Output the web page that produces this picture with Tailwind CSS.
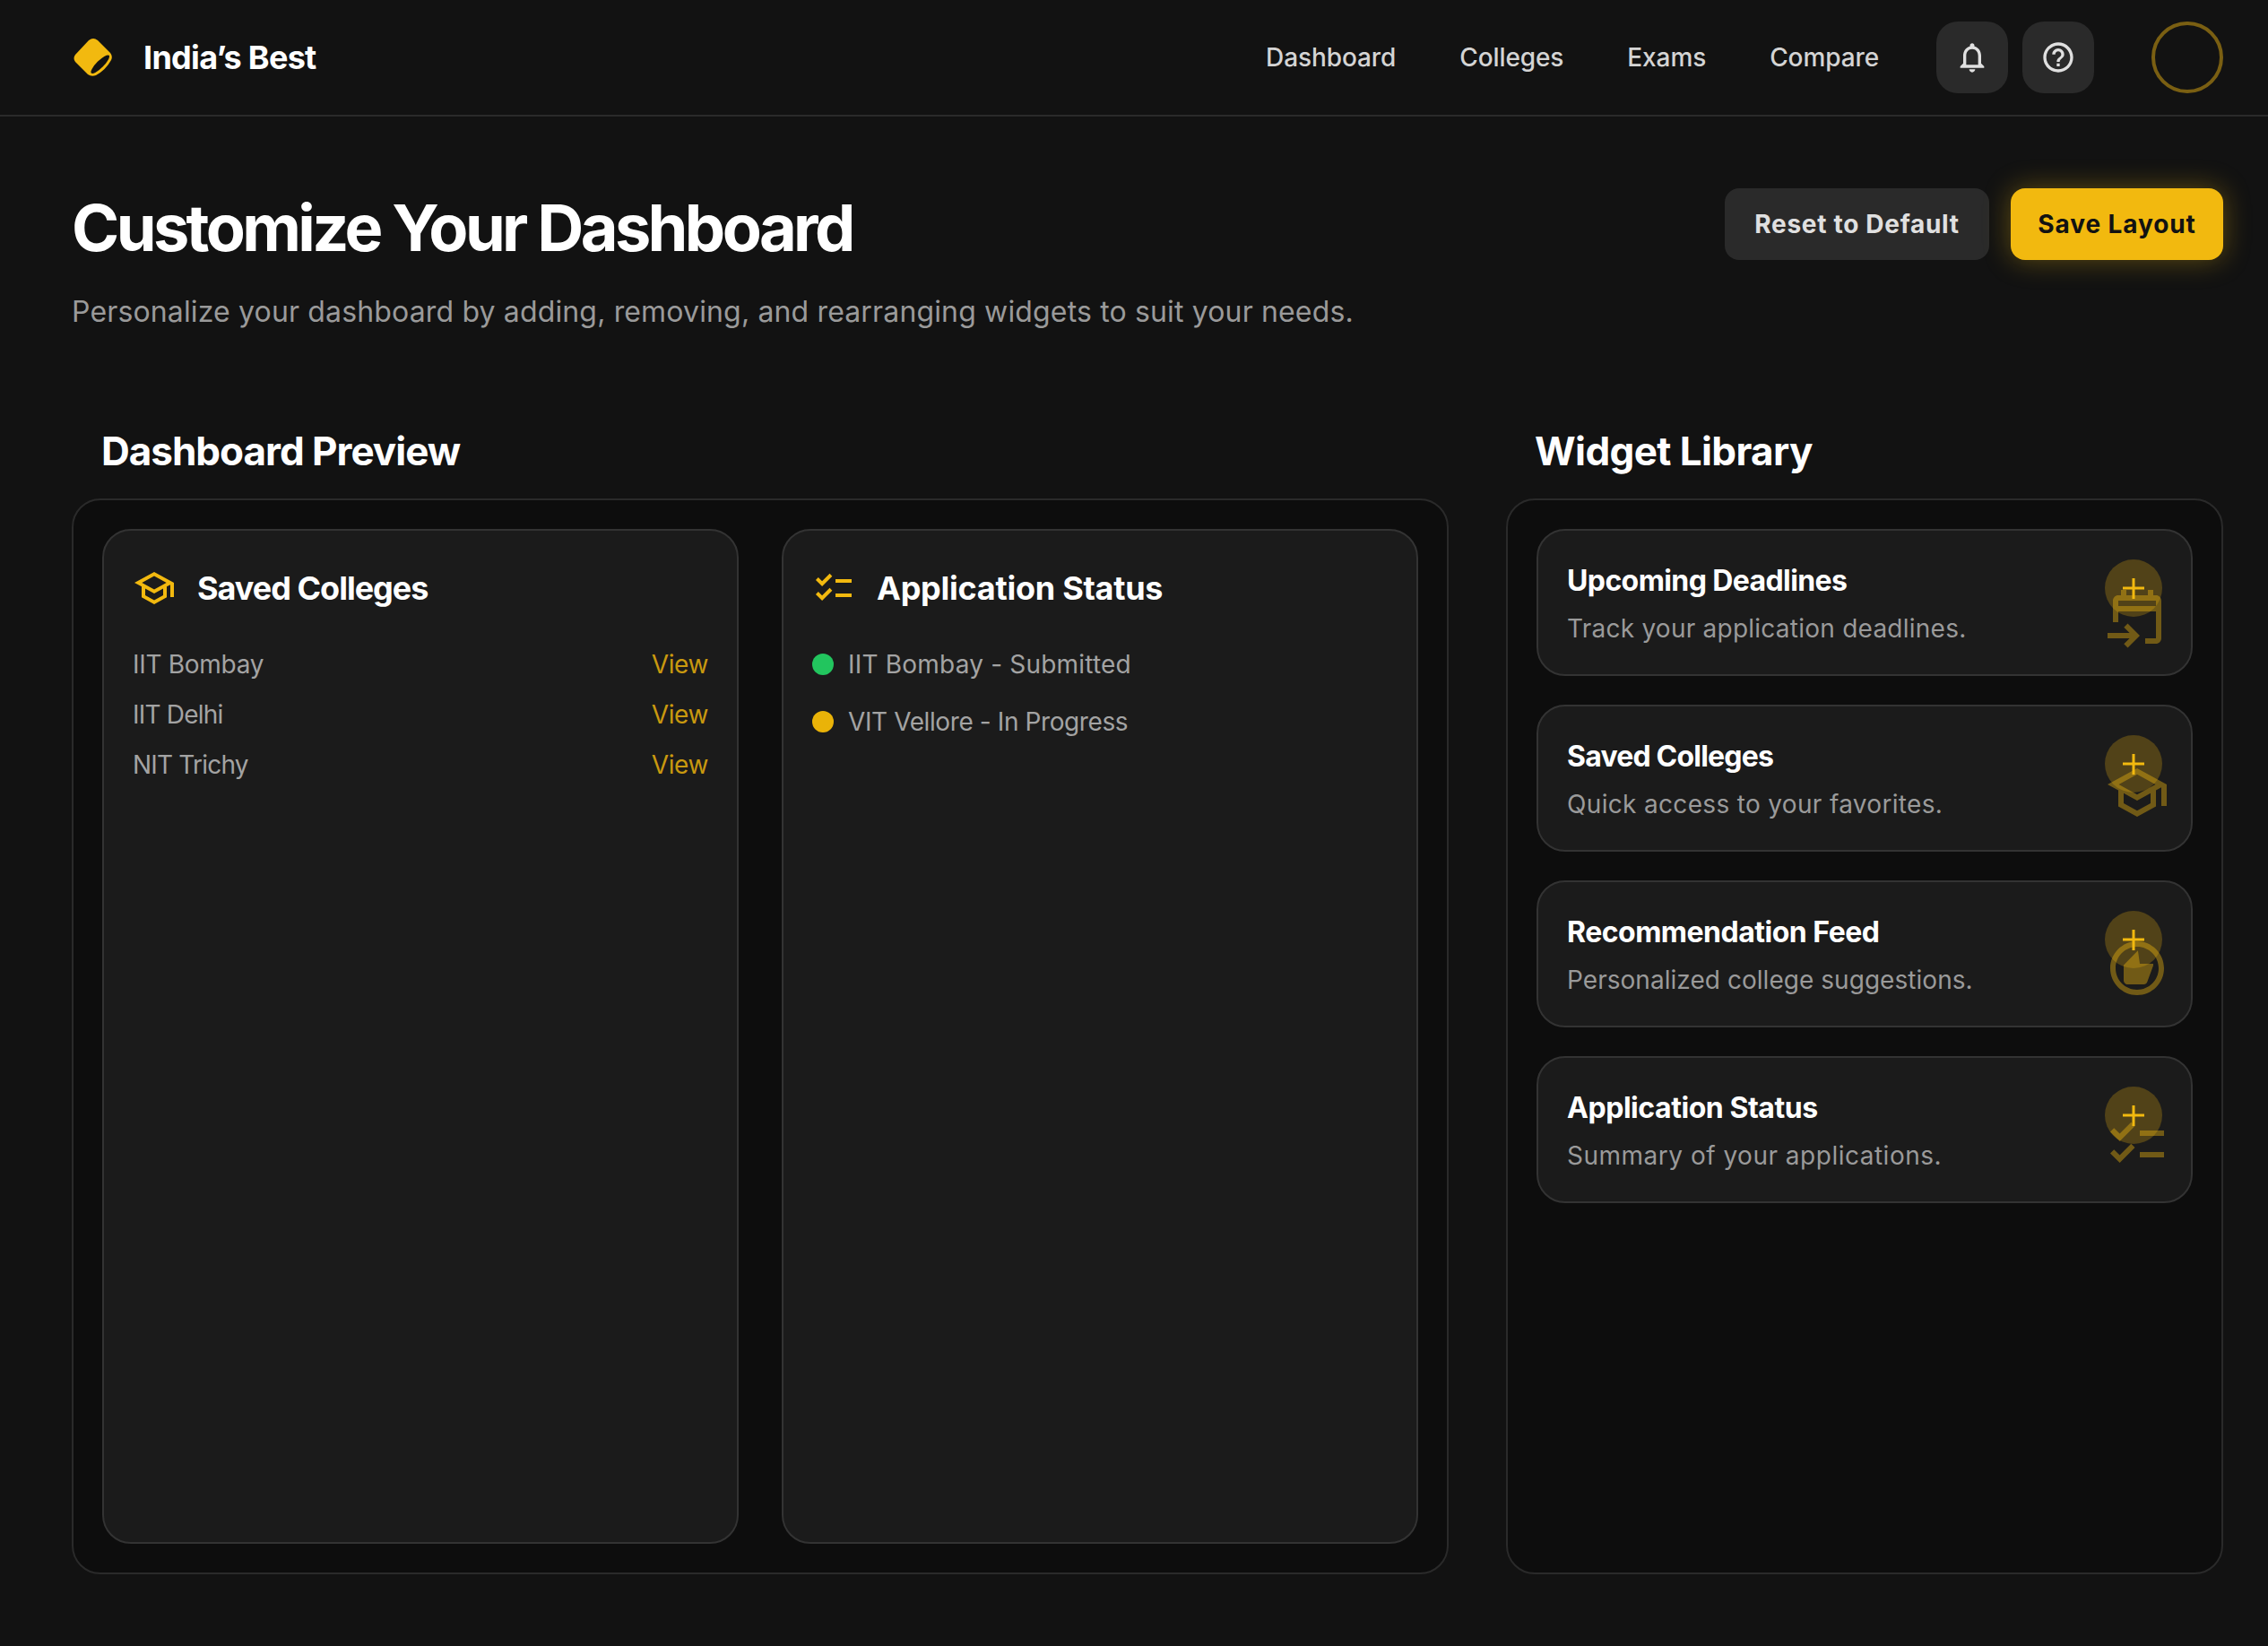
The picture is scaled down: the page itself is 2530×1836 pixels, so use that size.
<!DOCTYPE html>
<html lang="en">
<head>
    <meta charset="UTF-8">
    <title>India's Best - Customize Dashboard</title>
    <script src="https://cdn.jsdelivr.net/npm/@tailwindcss/browser@4"></script>
</head>
<body class="min-h-screen bg-[#121212] text-white font-['Inter',sans-serif]">

    <!-- Header -->
    <header class="h-[130px] border-b-2 border-[#2a2a2a] pl-[80px] pr-[50px] flex items-center justify-between">
        <div class="flex items-center gap-[32px]">
            <svg class="w-[48px] h-[48px]" viewBox="80 40 48 48">
                <path d="M84 61 L99 45 Q104 41 109 45 L123 59 Q126 63 124 67 Q118 78 107 84 Q102 86 98 83 L84 69 Q81 65 84 61 Z" fill="#f2b90f"/>
                <ellipse cx="111.7" cy="71.7" rx="14" ry="4" transform="rotate(-45 111.7 71.7)" fill="#121212"/>
            </svg>
            <span class="text-[36px] leading-[48px] font-bold tracking-[-0.7px]">India’s Best</span>
        </div>
        <div class="flex items-center">
            <nav class="flex items-center gap-[71px] text-[28px] font-medium text-[#d4d4d4] tracking-[-0.1px]">
                <a>Dashboard</a>
                <a>Colleges</a>
                <a>Exams</a>
                <a>Compare</a>
            </nav>
            <button class="ml-[64px] w-[80px] h-[80px] rounded-[24px] bg-[#2a2a2a] flex items-center justify-center">
                <svg class="w-[40px] h-[40px]" viewBox="0 0 24 24" fill="#e0e0e0"><path d="M12 22c1.1 0 2-.9 2-2h-4c0 1.1.89 2 2 2zm6-6v-5c0-3.07-1.64-5.64-4.5-6.32V4c0-.83-.67-1.5-1.5-1.5s-1.5.67-1.5 1.5v.68C7.63 5.36 6 7.92 6 11v5l-2 2v1h16v-1l-2-2zm-2 1H8v-6c0-2.48 1.51-4.5 4-4.5s4 2.02 4 4.5v6z"/></svg>
            </button>
            <button class="ml-[16px] w-[80px] h-[80px] rounded-[24px] bg-[#2a2a2a] flex items-center justify-center">
                <svg class="w-[40px] h-[40px]" viewBox="0 0 24 24" fill="#e0e0e0"><path d="M11 18h2v-2h-2v2zm1-16C6.48 2 2 6.48 2 12s4.48 10 10 10 10-4.48 10-10S17.52 2 12 2zm0 18c-4.41 0-8-3.59-8-8s3.59-8 8-8 8 3.59 8 8-3.59 8-8 8zm0-14c-2.21 0-4 1.79-4 4h2c0-1.1.9-2 2-2s2 .9 2 2c0 2-3 1.75-3 5h2c0-2.25 3-2.5 3-5 0-2.21-1.79-4-4-4z"/></svg>
            </button>
            <div class="ml-[64px] w-[80px] h-[80px] rounded-full border-[4px] border-[#7a5f12]"></div>
        </div>
    </header>

    <main class="pl-[80px] pr-[50px]">
        <!-- Page title -->
        <div class="pt-[80px] flex items-start justify-between">
            <div>
                <h1 class="text-[72px] leading-[88px] font-bold tracking-[-3.6px]">Customize Your Dashboard</h1>
                <p class="mt-[26px] text-[32px] leading-[48px] text-[#9a9a9a] tracking-[0.15px]">Personalize your dashboard by adding, removing, and rearranging widgets to suit your needs.</p>
            </div>
            <div class="flex gap-[24px]">
                <button class="w-[295px] h-[80px] rounded-[16px] bg-[#2a2a2a] text-[28px] font-bold text-[#e0e0e0] tracking-[0.7px]">Reset to Default</button>
                <button class="w-[237px] h-[80px] rounded-[16px] bg-[#f2b90f] text-[28px] font-bold text-[#121212] tracking-[0.9px] shadow-[0_0_30px_rgba(242,185,15,0.35)]">Save Layout</button>
            </div>
        </div>

        <div class="mt-[103px] grid grid-cols-[1536px_800px] gap-[64px]">
            <!-- Dashboard preview -->
            <section>
                <h2 class="pl-[33px] text-[44px] leading-[56px] font-bold tracking-[-1px]">Dashboard Preview</h2>
                <div class="mt-[25px] h-[1200px] rounded-[32px] bg-[#0d0d0d] border-2 border-[#2a2a2a] p-[32px] grid grid-cols-2 gap-[48px]">
                    <div class="rounded-[32px] bg-[#1b1b1b] border-2 border-[#333333] p-[32px]">
                        <div class="h-[64px] flex items-center gap-[24px]">
                            <svg class="w-[48px] h-[48px]" viewBox="0 0 24 24" fill="#f2b90f"><path d="M12 3L1 9l4 2.18v6L12 21l7-3.82v-6l2-1.09V17h2V9L12 3zm6.82 6L12 12.72 5.18 9 12 5.28 18.82 9zM17 15.99l-5 2.73-5-2.73v-3.72L12 15l5-2.73v3.72z"/></svg>
                            <h3 class="text-[36px] font-bold tracking-[-1px]">Saved Colleges</h3>
                        </div>
                        <ul class="mt-[33px] flex flex-col gap-[16px] text-[28px] leading-[40px] text-[#a3a3a3]">
                            <li class="flex justify-between"><span class="tracking-[-0.3px]">IIT Bombay</span><a class="text-[#c9990f] tracking-[-0.4px]">View</a></li>
                            <li class="flex justify-between"><span class="tracking-[-0.8px]">IIT Delhi</span><a class="text-[#c9990f] tracking-[-0.4px]">View</a></li>
                            <li class="flex justify-between"><span class="tracking-[-0.8px]">NIT Trichy</span><a class="text-[#c9990f] tracking-[-0.4px]">View</a></li>
                        </ul>
                    </div>
                    <div class="rounded-[32px] bg-[#1b1b1b] border-2 border-[#333333] p-[32px]">
                        <div class="h-[64px] flex items-center gap-[24px]">
                            <svg class="w-[48px] h-[48px]" viewBox="0 0 24 24" fill="#f2b90f"><path d="M22 7h-9v2h9V7zm0 8h-9v2h9v-2zM5.54 11L2 7.46l1.41-1.41 2.12 2.12 4.24-4.24 1.41 1.41L5.54 11zm0 8L2 15.46l1.41-1.41 2.12 2.12 4.24-4.24 1.41 1.41L5.54 19z"/></svg>
                            <h3 class="text-[36px] font-bold tracking-[-0.25px]">Application Status</h3>
                        </div>
                        <ul class="mt-[33px] flex flex-col gap-[24px] text-[28px] leading-[40px] text-[#a3a3a3]">
                            <li class="flex items-center gap-[16px] tracking-[0.2px]"><span class="w-[24px] h-[24px] rounded-full bg-[#22c55e]"></span>IIT Bombay - Submitted</li>
                            <li class="flex items-center gap-[16px] tracking-[-0.4px]"><span class="w-[24px] h-[24px] rounded-full bg-[#eab308]"></span>VIT Vellore - In Progress</li>
                        </ul>
                    </div>
                </div>
            </section>

            <!-- Widget library -->
            <section>
                <h2 class="pl-[32px] text-[44px] leading-[56px] font-bold tracking-[-0.6px]">Widget Library</h2>
                <div class="mt-[25px] h-[1200px] rounded-[32px] bg-[#0d0d0d] border-2 border-[#2a2a2a] p-[32px] flex flex-col gap-[32px]">

                    <div class="h-[164px] rounded-[32px] bg-[#1b1b1b] border-2 border-[#333333] p-[32px] flex justify-between">
                        <div>
                            <h4 class="text-[32px] leading-[48px] font-bold tracking-[-0.6px]">Upcoming Deadlines</h4>
                            <p class="mt-[9px] text-[28px] leading-[40px] text-[#9a9a9a] tracking-[0.24px]">Track your application deadlines.</p>
                        </div>
                        <div class="relative w-[64px] h-[64px] rounded-full bg-[#f2b90f]/25 flex items-center justify-center">
                            <svg class="w-[24px] h-[24px]" viewBox="0 0 24 24" fill="#f2b90f"><path d="M10.5 1h3v9.5H24v3H13.500V24h-3V13.500H0v-3h10.500z"/></svg>
                            <svg class="absolute left-0 top-[28px] w-[72px] h-[72px] opacity-40" viewBox="0 0 24 24" fill="#f2b90f"><path d="M19 4h-1V2h-2v2H8V2H6v2H5C3.900 4 3 4.900 3 6v8h2v-4h14v10h-4v2h4c1.100 0 2-.9 2-2V6c0-1.100-.9-2-2-2zM5 8V6h14v2H5z"/><path d="M8.500 14.500L7.100 15.900 9.200 18H1v2h8.200l-2.100 2.100 1.400 1.400 4.500-4.500z"/></svg>
                        </div>
                    </div>

                    <div class="h-[164px] rounded-[32px] bg-[#1b1b1b] border-2 border-[#333333] p-[32px] flex justify-between">
                        <div>
                            <h4 class="text-[32px] leading-[48px] font-bold tracking-[-0.8px]">Saved Colleges</h4>
                            <p class="mt-[9px] text-[28px] leading-[40px] text-[#9a9a9a] tracking-[0.33px]">Quick access to your favorites.</p>
                        </div>
                        <div class="relative w-[64px] h-[64px] rounded-full bg-[#f2b90f]/25 flex items-center justify-center">
                            <svg class="w-[24px] h-[24px]" viewBox="0 0 24 24" fill="#f2b90f"><path d="M10.5 1h3v9.5H24v3H13.500V24h-3V13.500H0v-3h10.500z"/></svg>
                            <svg class="absolute left-0 top-[28px] w-[72px] h-[72px] opacity-40" viewBox="0 0 24 24" fill="#f2b90f"><path d="M12 3L1 9l4 2.18v6L12 21l7-3.82v-6l2-1.09V17h2V9L12 3zm6.82 6L12 12.72 5.18 9 12 5.28 18.82 9zM17 15.99l-5 2.73-5-2.73v-3.72L12 15l5-2.73v3.72z"/></svg>
                        </div>
                    </div>

                    <div class="h-[164px] rounded-[32px] bg-[#1b1b1b] border-2 border-[#333333] p-[32px] flex justify-between">
                        <div>
                            <h4 class="text-[32px] leading-[48px] font-bold tracking-[-0.5px]">Recommendation Feed</h4>
                            <p class="mt-[9px] text-[28px] leading-[40px] text-[#9a9a9a] tracking-[0.04px]">Personalized college suggestions.</p>
                        </div>
                        <div class="relative w-[64px] h-[64px] rounded-full bg-[#f2b90f]/25 flex items-center justify-center">
                            <svg class="w-[24px] h-[24px]" viewBox="0 0 24 24" fill="#f2b90f"><path d="M10.5 1h3v9.5H24v3H13.500V24h-3V13.500H0v-3h10.500z"/></svg>
                            <svg class="absolute left-0 top-[28px] w-[72px] h-[72px] opacity-40" viewBox="0 0 24 24" fill="#f2b90f"><path d="M12 2C6.48 2 2 6.48 2 12s4.48 10 10 10 10-4.48 10-10S17.52 2 12 2zm0 18c-4.41 0-8-3.590-8-8s3.590-8 8-8 8 3.590 8 8-3.590 8-8 8z"/><path d="M12.300 5.400L13 10.300H18V11L15.800 17c-.2.6-.7 1-1.300 1H8.500C7.700 18 7 17.300 7 16.500V10.800z"/></svg>
                        </div>
                    </div>

                    <div class="h-[164px] rounded-[32px] bg-[#1b1b1b] border-2 border-[#333333] p-[32px] flex justify-between">
                        <div>
                            <h4 class="text-[32px] leading-[48px] font-bold tracking-[-0.45px]">Application Status</h4>
                            <p class="mt-[9px] text-[28px] leading-[40px] text-[#9a9a9a] tracking-[0.5px]">Summary of your applications.</p>
                        </div>
                        <div class="relative w-[64px] h-[64px] rounded-full bg-[#f2b90f]/25 flex items-center justify-center">
                            <svg class="w-[24px] h-[24px]" viewBox="0 0 24 24" fill="#f2b90f"><path d="M10.5 1h3v9.5H24v3H13.500V24h-3V13.500H0v-3h10.500z"/></svg>
                            <svg class="absolute left-0 top-[28px] w-[72px] h-[72px] opacity-40" viewBox="0 0 24 24" fill="#f2b90f"><path d="M22 7h-9v2h9V7zm0 8h-9v2h9v-2zM5.54 11L2 7.46l1.41-1.41 2.12 2.12 4.24-4.24 1.41 1.41L5.54 11zm0 8L2 15.46l1.41-1.41 2.12 2.12 4.24-4.24 1.41 1.41L5.54 19z"/></svg>
                        </div>
                    </div>

                </div>
            </section>
        </div>
    </main>
</body>
</html>
